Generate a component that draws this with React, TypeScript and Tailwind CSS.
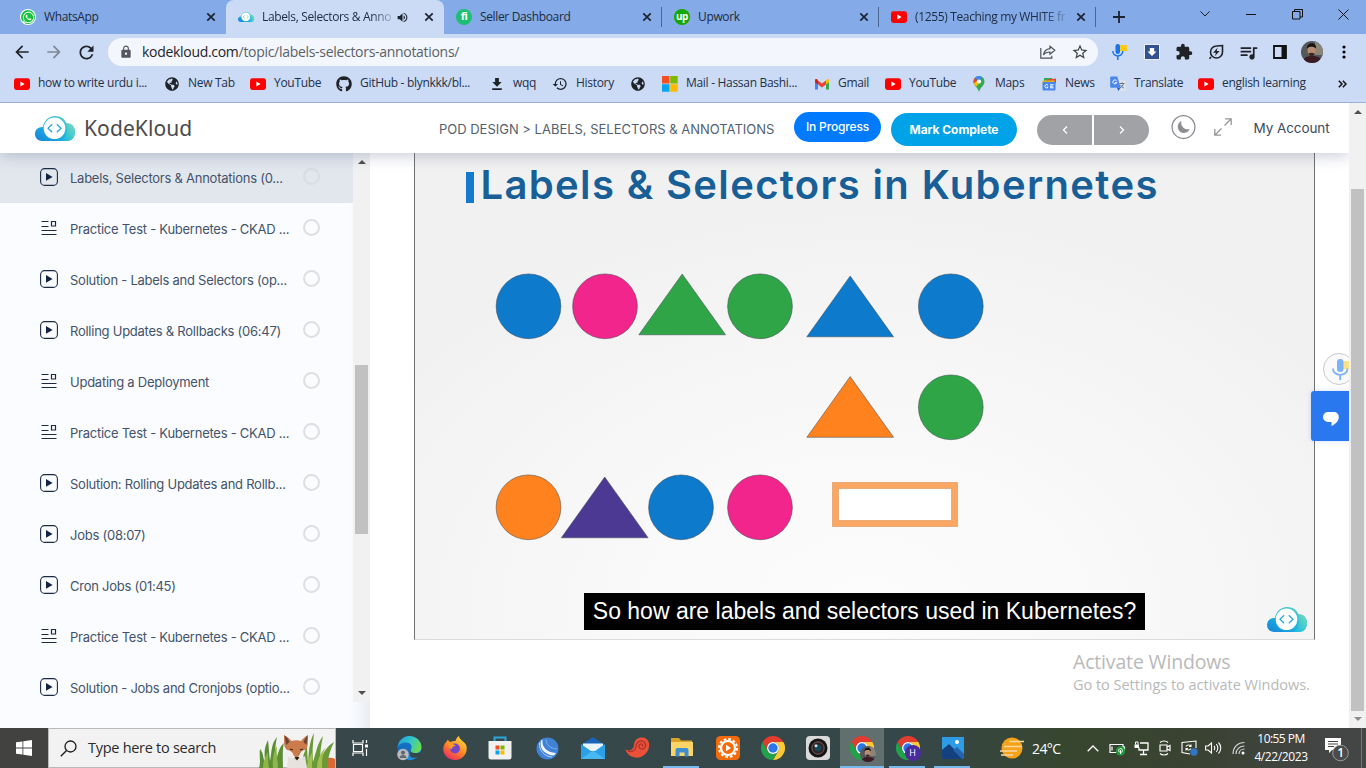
import React from "react";
import { FaGithub, FaGlobeAmericas, FaWhatsapp } from "react-icons/fa";
import { MdExtension, MdHistory, MdLock, MdQueueMusic, MdRefresh, MdStarBorder, MdVolumeUp, MdArrowBack, MdArrowForward } from "react-icons/md";

const UI = "font-['Open_Sans','Noto_Sans',sans-serif]";

/* ---------- small brand icons ---------- */

const YouTube = () => (
  <svg width="16" height="16" viewBox="0 0 16 16">
    <rect x="0" y="2.3" width="16" height="11.6" rx="2.4" fill="#f00" />
    <path d="M6.4 5.6v5l4.2-2.5z" fill="#fff" />
  </svg>
);

const WhatsApp = () => (
  <span className="flex size-4 items-center justify-center rounded-full bg-white">
    <span className="flex size-[14px] items-center justify-center rounded-full bg-[#16c23e] text-white">
      <FaWhatsapp size={13} />
    </span>
  </span>
);

const Cloud = ({ w, h, id }: { w: number; h: number; id: string }) => (
  <svg width={w} height={h} viewBox="0 0 40 25">
    <defs>
      <linearGradient id={id + "a"} x1="0" y1="1" x2="1" y2="0">
        <stop offset="0" stopColor="#1583dc" />
        <stop offset=".55" stopColor="#22bce0" />
        <stop offset="1" stopColor="#6fd6bd" />
      </linearGradient>
      <linearGradient id={id + "b"} x1="0" y1="1" x2="1" y2="0">
        <stop offset="0" stopColor="#12b8e3" />
        <stop offset="1" stopColor="#7ddcb8" />
      </linearGradient>
    </defs>
    <path d="M7 25C3 25 0 22 0 18c0-4 3-7.200 8-7 1-6 5.500-11 12-11 6 0 10 3 11.500 7.500C37 7 40 11 40 16c0 5-3 9-8 9z" fill={`url(#${id}a)`} />
    <path d="M27 25c5-4 6-12 4-17.500 5-1 9 3.500 9 8.500 0 5-3 9-8 9z" fill={`url(#${id}b)`} />
    <circle cx="19.500" cy="12.300" r="10.800" fill="#fff" />
    <path d="M17.200 8.200l-4.200 4 4.200 4M21.800 8.200l4.200 4-4.200 4" fill="none" stroke="#29a9d8" strokeWidth="1.300" />
  </svg>
);

const Microsoft = () => (
  <svg width="16" height="16" viewBox="0 0 16 16">
    <path d="M0 0h7.500v7.500H0z" fill="#f25022" />
    <path d="M8.200 0h7.500v7.500H8.200z" fill="#7fba00" />
    <path d="M0 8.200h7.500v7.500H0z" fill="#00a4ef" />
    <path d="M8.200 8.200h7.500v7.500H8.200z" fill="#ffb900" />
  </svg>
);

const Gmail = () => (
  <svg width="16" height="16" viewBox="0 0 16 16">
    <path d="M1 5v8.500h3V8z" fill="#4285f4" />
    <path d="M15 5v8.500h-3V8z" fill="#34a853" />
    <path d="M4 4.500l4 3 4-3v4l-4 3-4-3z" fill="#ea4335" />
    <path d="M1 4.400c0-1.800 1.800-2 3 0v4L1 6.200z" fill="#c5221f" />
    <path d="M15 4.400c0-1.800-1.800-2-3 0v4l3-2.200z" fill="#fbbc04" />
  </svg>
);

const MapsPin = () => (
  <svg width="16" height="16" viewBox="0 0 16 16">
    <path d="M8 0a5.500 5.500 0 0 0-5.500 5.500c0 4 4 5.500 5.500 10.500 1.500-5 5.500-6.500 5.500-10.500A5.500 5.500 0 0 0 8 0z" fill="#34a853" />
    <path d="M8 0a5.500 5.500 0 0 0-4.300 2L8 5.500l3-4.600A5.500 5.500 0 0 0 8 0z" fill="#4285f4" />
    <path d="M3.700 2a5.500 5.500 0 0 0-.8 5.300L7 4.500z" fill="#ea4335" />
    <path d="M2.900 7.300c.5 1.300 1.300 2.300 2.200 3.400l4-4.500L7 4.400z" fill="#fbbc04" />
    <circle cx="8" cy="5.500" r="2.100" fill="#fff" />
  </svg>
);

const News = () => (
  <svg width="16" height="16" viewBox="0 0 16 16">
    <path d="M3 2l8 0v5H3z" fill="#34a853" />
    <path d="M6 3.500l9-1v5H6z" fill="#ea4335" />
    <path d="M1.500 4.500h12v4h-12z" fill="#fbbc04" />
    <rect x="1.500" y="5.800" width="13" height="8.700" rx="1" fill="#4a86ee" />
    <path d="M7 9.200a1.700 1.700 0 1 0 .1 2H5.800M9 8.800h3.600M9 10.300h2.800M9 11.800h3.600" stroke="#fff" fill="none" />
  </svg>
);

const Translate = () => (
  <svg width="16" height="16" viewBox="0 0 16 16">
    <path d="M6 4.500h8.500a1 1 0 0 1 1 1V14a1 1 0 0 1-1 1H9z" fill="#dfe3e8" />
    <path d="M9.500 7.500h5M12 6.300v1.200M13.500 7.500c-.5 2-2 3.700-3.500 4.300M10.500 8.800c.8 1.600 2 2.600 3.500 3.300" stroke="#6b7683" fill="none" />
    <path d="M1.200.5h6l3.500 11.300H1.200a1 1 0 0 1-1-1v-9.300a1 1 0 0 1 1-1z" fill="#4a86ee" />
    <path d="M6.500 4.700a2 2 0 1 0 .3 1.900H5" stroke="#fff" fill="none" />
    <path d="M7 11.800h3.700L8.300 15z" fill="#2a5fc4" />
  </svg>
);

const Download = () => (
  <svg width="16" height="16" viewBox="0 0 16 16">
    <path d="M6.100 2h3.800v4h2.800L8 10.800 3.300 6h2.800zM3.200 12.300h9.600V14H3.200z" fill="#1f2328" />
  </svg>
);

const CloseX = () => (
  <svg width="10" height="10" viewBox="0 0 10 10">
    <path d="M1.300 1.300l7.400 7.400M8.700 1.300L1.300 8.700" stroke="#1c2330" strokeWidth="1.700" />
  </svg>
);

/* ---------- tab strip ---------- */

type TabProps = { w: string; icon: React.ReactNode; label: string; active?: boolean; fade?: boolean; sep?: boolean };

const Tab = ({ w, icon, label, active, fade, sep }: TabProps) => (
  <div className={`${w} relative flex h-full shrink-0 items-center pl-3 pr-[10px] ${active ? "rounded-t-lg bg-[#cbdbf5]" : ""}`}>
    <span className="mr-2 flex w-4 shrink-0 justify-center">{icon}</span>
    <span className="flex-1 whitespace-nowrap text-[12px] tracking-[-0.35px] text-[#1d2a40]">
      <span className={fade ? "[mask-image:linear-gradient(to_right,black_85%,rgba(0,0,0,0.25))]" : ""}>{label}</span>
    </span>
    {active && <MdVolumeUp size={13} className="mr-[15px] shrink-0 text-[#1c2330]" />}
    <span className="shrink-0"><CloseX /></span>
    {sep && <span className="absolute right-0 top-[7px] h-5 w-px bg-[#4c6690]" />}
  </div>
);

const TabStrip = () => (
  <div className="flex h-[34px] bg-[#84abe8] pl-2">
    <Tab w="w-[218px]" icon={<WhatsApp />} label="WhatsApp" />
    <Tab w="w-[218px]" icon={<Cloud w={16} h={10} id="tab" />} label="Labels, Selectors & Anno" active fade />
    <Tab w="w-[218px]" sep label="Seller Dashboard" icon={<span className="flex size-4 items-center justify-center rounded-full bg-[#1dbf73] pb-px text-[11px] font-bold tracking-[-0.5px] text-white">fi</span>} />
    <Tab w="w-[217px]" sep label="Upwork" icon={<span className="flex size-4 items-center justify-center rounded-full bg-[#14a800] pb-0.5 text-[10px] font-bold tracking-[-0.5px] text-white">up</span>} />
    <Tab w="w-[217px]" sep fade label="(1255) Teaching my WHITE fr" icon={<YouTube />} />
    <div className="flex w-[45px] items-center justify-center">
      <svg width="12" height="12" viewBox="0 0 12 12"><path d="M6 0v12M0 6h12" stroke="#1c2330" strokeWidth="1.800" /></svg>
    </div>
    <div className="ml-[41px] flex h-7">
      <span className="flex w-[46px] items-center justify-center"><svg width="10" height="6" viewBox="0 0 10 6"><path d="M.4.4L5 5 9.600.4" fill="none" stroke="#222" /></svg></span>
      <span className="flex w-[46px] items-center justify-center"><svg width="10" height="1"><path d="M0 .5h10" stroke="#111" /></svg></span>
      <span className="flex w-[46px] items-center justify-center"><svg width="11" height="11" viewBox="0 0 11 11"><path d="M.5 2.500h7.500v7.500H.5zM2.500 2.500v-2H10.500V8H8" fill="none" stroke="#111" /></svg></span>
      <span className="flex w-[46px] items-center justify-center"><svg width="11" height="11" viewBox="0 0 11 11"><path d="M.5.500l10 10M10.500.500l-10 10" stroke="#111" /></svg></span>
    </div>
  </div>
);

/* ---------- toolbar ---------- */

const Cell = ({ children }: { children: React.ReactNode }) => (
  <span className="flex h-full w-8 shrink-0 items-center justify-center text-[#1f2328]">{children}</span>
);

const Avatar = ({ size, id }: { size: number; id: string }) => (
  <svg width={size} height={size} viewBox="0 0 22 22">
    <clipPath id={id}><circle cx="11" cy="11" r="11" /></clipPath>
    <g clipPath={`url(#${id})`}>
      <path d="M0 0h22v22H0z" fill="#55585a" />
      <path d="M14 0h8v14h-8z" fill="#8b8478" />
      <path d="M2 22c0-6 4-7 9-7s10 1 10 7z" fill="#3c1c24" />
      <ellipse cx="10.500" cy="9.500" rx="4" ry="5.300" fill="#b98c72" />
      <path d="M6 7.500c-.5-7 10-7 9 0-2-2.500-7-2.500-9 0z" fill="#171413" />
      <path d="M7.500 12.500c2-1 4.500-1 6 0-.5 3.500-5 3.500-6 0z" fill="#3a2822" />
    </g>
  </svg>
);

const Toolbar = () => (
  <div className="flex h-9 items-center pl-1.5">
    <Cell><MdArrowBack size={20} /></Cell>
    <Cell><MdArrowForward size={20} className="text-[#7d8797]" /></Cell>
    <Cell><MdRefresh size={21} /></Cell>
    <div className="ml-1.5 flex h-7 w-[990px] items-center rounded-full bg-[#f3f7fd] pl-[11px]">
      <MdLock size={14} className="text-[#54585e]" />
      <span className="ml-[9px] flex-1 whitespace-nowrap pb-0.5 text-[14px] tracking-[-0.3px] text-[#5b6067]">
        <span className="text-[#1f2328]">kodekloud.com</span>/topic/labels-selectors-annotations/
      </span>
      <Cell>
        <svg width="16" height="16" viewBox="0 0 16 16"><path d="M.8 4v10.200h11v-2.500M10 2.200l4.800 4-4.800 4V8c-3 0-5 .8-6.500 3 .4-3.500 2.500-6 6.500-6.400z" fill="none" stroke="#4c5157" strokeWidth="1.200" /></svg>
      </Cell>
      <Cell><MdStarBorder size={18} className="text-[#3c4147]" /></Cell>
      <span className="w-0.5" />
    </div>
    <div className="ml-[6px] flex h-full items-center">
      <Cell>
        <svg width="16" height="16" viewBox="0 0 16 16">
          <path d="M8 1h7v6H8z" fill="#fcc81c" />
          <rect x="3.500" y="0" width="4.500" height="10" rx="2.200" fill="#1a73e8" />
          <path d="M.8 7c0 6.500 10 6.500 10 0M5.800 12v4" stroke="#1a73e8" strokeWidth="1.500" fill="none" />
        </svg>
      </Cell>
      <Cell>
        <svg width="16" height="16" viewBox="0 0 16 16">
          <path d="M0 0h16v16H0z" fill="#e9eefa" />
          <rect x="1" y="1" width="14" height="14" fill="#33508f" />
          <path d="M5.800 4h4.400v3.500h2.300L8 12 3.500 7.500h2.300z" fill="#fff" />
        </svg>
      </Cell>
      <Cell><MdExtension size={18} /></Cell>
      <Cell>
        <svg width="16" height="16" viewBox="0 0 16 16">
          <path d="M14.500 1.500v6.500a6 6 0 1 1-6-6zM3 13l-1.500 1.800" fill="none" stroke="#1f2328" strokeWidth="1.600" />
          <path d="M9.600 3.800L5 8.700h3l-1.200 3.600 4.800-5.200H8.700z" fill="#1f2328" />
        </svg>
      </Cell>
      <Cell><MdQueueMusic size={21} /></Cell>
      <Cell>
        <svg width="14" height="14" viewBox="0 0 14 14"><path d="M1 1h12v12H1z" fill="none" stroke="#111" strokeWidth="1.800" /><path d="M8.500 1H13v12H8.500z" fill="#111" /></svg>
      </Cell>
      <Cell><Avatar size={22} id="avatar-toolbar" /></Cell>
      <Cell>
        <svg width="4" height="14" viewBox="0 0 4 14"><circle cx="2" cy="2" r="1.600" /><circle cx="2" cy="7" r="1.600" /><circle cx="2" cy="12" r="1.600" /></svg>
      </Cell>
    </div>
  </div>
);

/* ---------- bookmarks ---------- */

const bookmarks: { w: string; icon: React.ReactNode; label: string }[] = [
  { w: "w-[150px]", icon: <YouTube />, label: "how to write urdu i..." },
  { w: "w-[86px]", icon: <FaGlobeAmericas size={14} />, label: "New Tab" },
  { w: "w-[86px]", icon: <YouTube />, label: "YouTube" },
  { w: "w-[153px]", icon: <FaGithub size={16} />, label: "GitHub - blynkkk/bl..." },
  { w: "w-[63px]", icon: <Download />, label: "wqq" },
  { w: "w-[78px]", icon: <MdHistory size={16} />, label: "History" },
  { w: "w-[32px]", icon: <FaGlobeAmericas size={14} />, label: "" },
  { w: "w-[152px]", icon: <Microsoft />, label: "Mail - Hassan Bashi..." },
  { w: "w-[71px]", icon: <Gmail />, label: "Gmail" },
  { w: "w-[86px]", icon: <YouTube />, label: "YouTube" },
  { w: "w-[70px]", icon: <MapsPin />, label: "Maps" },
  { w: "w-[69px]", icon: <News />, label: "News" },
  { w: "w-[88px]", icon: <Translate />, label: "Translate" },
  { w: "w-[138px]", icon: <YouTube />, label: "english learning" },
];

const Bookmarks = () => (
  <div className="flex h-[33px] items-center border-b border-[#9db0d3] pb-1 pl-[14px] text-[12px] tracking-[-0.3px] text-[#22304a]">
    {bookmarks.map((b, i) => (
      <div key={i} className={`${b.w} flex h-5 shrink-0 items-center gap-2 whitespace-nowrap`}>
        <span className="flex w-4 shrink-0 justify-center text-[#1f2328]">{b.icon}</span>
        <span className="pb-0.5">{b.label}</span>
      </div>
    ))}
    <svg className="ml-[2px]" width="9" height="8" viewBox="0 0 9 8"><path d="M.8.800L4 4 .8 7.200M4.800.800L8 4 4.800 7.200" fill="none" stroke="#111" strokeWidth="1.500" /></svg>
  </div>
);

/* ---------- course page ---------- */

const SiteHeader = () => (
  <header className="relative z-10 flex h-[50px] shrink-0 items-start bg-white pl-[35px] text-[13px] shadow-[0_2px_16px_rgba(70,80,125,0.32)]">
    <span className="mt-[13px]"><Cloud w={40} h={25} id="logo" /></span>
    <span className="ml-[9px] mt-[10px] w-[345px] font-['Noto_Sans',sans-serif] text-[21px] leading-[30px] tracking-[0.1px] text-[#4a4a4c]">KodeKloud</span>
    <span className="ml-[10px] mt-4 w-[355px] whitespace-nowrap leading-5 tracking-[-0.01px] text-[#535f70]">POD DESIGN &gt; LABELS, SELECTORS &amp; ANNOTATIONS</span>
    <span className="mt-[9px] flex h-[30px] w-[87px] items-center justify-center rounded-full bg-[#007bff] text-[12px] font-medium tracking-[-0.15px] text-white">In Progress</span>
    <span className="ml-[10px] mt-[10px] flex h-[33px] w-[126px] items-center justify-center rounded-full bg-[#00a2e8] text-[12px] font-bold tracking-[-0.05px] text-white">Mark Complete</span>
    <span className="ml-5 mt-3 flex gap-0.5">
      <span className="flex h-[30px] w-[55px] items-center justify-center rounded-l-full bg-[#a1a2a6]"><svg width="6" height="8" viewBox="0 0 6 8"><path d="M5 .5L1.500 4 5 7.500" fill="none" stroke="#fff" strokeWidth="1.300" /></svg></span>
      <span className="flex h-[30px] w-[55px] items-center justify-center rounded-r-full bg-[#a1a2a6]"><svg width="6" height="8" viewBox="0 0 6 8"><path d="M1 .5L4.500 4 1 7.500" fill="none" stroke="#fff" strokeWidth="1.300" /></svg></span>
    </span>
    <svg className="ml-[22px] mt-3" width="25" height="25" viewBox="0 0 25 25">
      <circle cx="12.500" cy="12.100" r="11.400" fill="none" stroke="#8b8d91" strokeWidth="1.300" />
      <path d="M10.500 6a6.200 6.200 0 1 0 8.200 8 6.500 6.500 0 0 1-8.200-8z" fill="#8b8d91" />
    </svg>
    <svg className="ml-[18px] mt-[15px]" width="18" height="18" viewBox="0 0 18 18">
      <path d="M10.500 7.500L17 1M11 .8h6.200V7M7.500 10.500L1 17M.8 11v6.200H7" fill="none" stroke="#95979b" strokeWidth="1.300" />
    </svg>
    <span className="ml-[21.500px] mt-[15px] whitespace-nowrap text-[13.500px] leading-5 tracking-[-0.08px] text-[#3c4a60]">My Account</span>
  </header>
);

const PlayIcon = () => (
  <svg width="18" height="18" viewBox="0 0 18 18">
    <rect x=".6" y=".6" width="16.800" height="16.800" rx="4" fill="none" stroke="#1c2b45" strokeWidth="1.100" />
    <path d="M6 5v7.800l6.600-3.900z" fill="#14233f" />
  </svg>
);

const QuizIcon = () => (
  <svg width="18" height="18" viewBox="0 0 18 18">
    <path d="M1.500 2.500h7M1.500 7.500h7M1.500 11.500h15M1.500 15.500h15M11.500 2.500h4v4.500h-4z" fill="none" stroke="#1c2b45" strokeWidth="1.200" />
  </svg>
);

const lessons: { quiz?: boolean; label: string }[] = [
  { label: "Labels, Selectors & Annotations (0..." },
  { label: "Practice Test - Kubernetes - CKAD ...", quiz: true },
  { label: "Solution - Labels and Selectors (op..." },
  { label: "Rolling Updates & Rollbacks (06:47)" },
  { label: "Updating a Deployment", quiz: true },
  { label: "Practice Test - Kubernetes - CKAD ...", quiz: true },
  { label: "Solution: Rolling Updates and Rollb..." },
  { label: "Jobs (08:07)" },
  { label: "Cron Jobs (01:45)" },
  { label: "Practice Test - Kubernetes - CKAD ...", quiz: true },
  { label: "Solution - Jobs and Cronjobs (optio..." },
];

const Sidebar = () => (
  <aside className="flex w-[370px] shrink-0 items-start bg-[#fafcff] shadow-[inset_-24px_0_20px_-20px_rgba(60,70,100,0.13)]">
    <div className="w-[353px]">
      {lessons.map((l, i) => (
        <div key={i} className={`flex items-center pl-10 ${i === 0 ? "h-[50px] bg-[#e2e7ee]" : "h-[51px]"}`}>
          <span className={i === 0 ? "-mt-[3px]" : "-mt-[2px]"}>{l.quiz ? <QuizIcon /> : <PlayIcon />}</span>
          <span className={`ml-3 w-[232px] whitespace-nowrap text-[13px] tracking-[-0.25px] text-[#44536a] ${i === 0 ? "pt-px" : "pt-[3px]"}`}>{l.label}</span>
          <span className={`-mt-[3px] ml-[1px] size-[17px] rounded-full border-2 ${i === 0 ? "border-[#d8dce3]" : "border-[#dedfe3]"}`} />
        </div>
      ))}
    </div>
    <div className="flex h-[549px] w-[17px] flex-col items-center bg-[#f1f1f1]">
      <span className="mt-[7px] border-x-[4px] border-b-[4px] border-x-transparent border-b-[#505050]" />
      <span className="mt-[201px] h-[169px] w-[13px] bg-[#c1c1c1]" />
      <span className="mt-[157px] border-x-[4px] border-t-[4px] border-x-transparent border-t-[#505050]" />
    </div>
  </aside>
);

const circles: [number, number, string][] = [
  [114, 153, "#0d7acc"],
  [190.500, 153, "#f2258c"],
  [345.500, 153, "#2fa547"],
  [536.300, 153, "#0d7acc"],
  [536.300, 254, "#2fa547"],
  [114, 354, "#ff821e"],
  [266.500, 354, "#0d7acc"],
  [345.500, 354, "#f2258c"],
];

const triangles: [number, number, string][] = [
  [268, 121, "#2fa547"],
  [436, 123, "#0d7acc"],
  [436, 223.500, "#ff821e"],
  [190.500, 324, "#4c3993"],
];

const Slide = () => (
  <section className="relative ml-11 h-[487px] w-[901px] shrink-0 border-x border-b border-x-[#6f7173] border-b-[#dcdcdc] bg-[radial-gradient(ellipse_65%_85%_at_50%_95%,#fcfcfc_0%,#f9f9f9_40%,#f1f1f1_100%)]">
    <div className="flex items-start pl-[51px] pt-[11px]">
      <span className="mt-2 h-[31px] w-[7.500px] bg-[#1279cc]" />
      <h1 className="ml-[7px] whitespace-nowrap font-[Inter,sans-serif] text-[40px] font-semibold leading-[42px] tracking-[1.350px] text-[#195f97]">Labels &amp; Selectors in Kubernetes</h1>
    </div>
    <svg className="absolute left-0 top-0" width="899" height="486" viewBox="0 0 899 486">
      {circles.map(([x, y, c], i) => (
        <circle key={i} cx={x - 0.5} cy={y + 0.3} r="32.400" fill={c} stroke="#3c4650" strokeOpacity=".5" />
      ))}
      {triangles.map(([x, y, c], i) => (
        <path key={i} d={`M${x - 0.8} ${y}l43.400 60.800h-86.800z`} fill={c} stroke="#3c4650" strokeOpacity=".5" />
      ))}
      <path d="M420.500 332.500h119v38h-119z" fill="#fff" stroke="#faa764" strokeWidth="6" />
      <path d="M417.500 329.500h125v44h-125zM423.500 335.500h113v32h-113z" fill="none" stroke="#e29a5f" strokeWidth=".7" />
    </svg>
    <div className="absolute left-[169px] top-[440px] flex h-[37px] w-[561px] items-center justify-center whitespace-nowrap bg-black font-['Liberation_Sans',Arial,sans-serif] text-[23px] text-white">
      So how are labels and selectors used in Kubernetes?
    </div>
    <span className="absolute left-[852px] top-[454px]"><Cloud w={40} h={25} id="slide" /></span>
  </section>
);

const Page = () => (
  <div className="flex h-[625px] bg-white font-[Inter,sans-serif]">
    <div className="relative flex w-[1349px] flex-col overflow-hidden">
      <SiteHeader />
      <div className="flex flex-1 items-stretch">
        <Sidebar />
        <main className="flex flex-col">
          <Slide />
          <div className={`${UI} ml-[703px] mt-[10px] whitespace-nowrap text-[#b9b9b9]`}>
            <div className="text-[19.500px] leading-6 tracking-[-0.17px]">Activate Windows</div>
            <div className="text-[14.500px] leading-[22px] tracking-[-0.02px]">Go to Settings to activate Windows.</div>
          </div>
        </main>
      </div>
      <div className="absolute left-[1323px] top-[250px] flex size-8 items-center justify-center rounded-full border border-[#c9cbd0] bg-[#fafafa]">
        <svg width="22" height="22" viewBox="0 0 22 22">
          <path d="M13 3h8v8h-8z" fill="#fde085" />
          <rect x="9" y="1" width="6.500" height="13" rx="3" fill="#7cb2f7" />
          <path d="M5 10.500c0 8.500 14.500 8.500 14.500 0M12.200 17v5" fill="none" stroke="#7cb2f7" strokeWidth="1.800" />
        </svg>
      </div>
      <div className="absolute left-[1311px] top-[288px] flex h-[50px] w-[38px] items-center justify-center rounded-l-[3px] bg-[#2a78f0] pl-0.5 pt-1.5 shadow-[0_0_4px_rgba(42,120,240,0.25)]">
        <svg width="16" height="14" viewBox="0 0 16 14"><path d="M5 0h6a4.800 4.800 0 0 1 4.800 5c0 4-3 7-7.300 9V10H5A5 5 0 0 1 5 0z" fill="#fff" /></svg>
      </div>
    </div>
    <div className="flex w-[17px] flex-col items-center bg-[#f1f1f1]">
      <span className="mt-[7px] border-x-[4px] border-b-[4px] border-x-transparent border-b-[#505050]" />
      <span className="mt-[75px] h-[522px] w-[13px] bg-[#c1c1c1]" />
      <span className="mt-[6px] border-x-[4px] border-t-[4px] border-x-transparent border-t-[#8d8d8d]" />
    </div>
  </div>
);

/* ---------- taskbar ---------- */

const Chrome = () => (
  <svg width="24" height="24" viewBox="0 0 24 24">
    <path d="M1.600 6A12 12 0 0 1 22.400 6H12A6 6 0 0 0 6.800 15z" fill="#e33b2e" />
    <path d="M22.400 6A12 12 0 0 1 12 24l5.200-9A6 6 0 0 0 12 6z" fill="#fcc934" />
    <path d="M1.600 6A12 12 0 0 0 12 24l5.200-9A6 6 0 0 1 6.800 15z" fill="#22a04a" />
    <circle cx="12" cy="12" r="6" fill="#fff" />
    <circle cx="12" cy="12" r="4.700" fill="#2b77ea" />
  </svg>
);

const Fox = () => (
  <svg width="76" height="39" viewBox="0 0 76 39">
    <path d="M0 39C2 33 0 27 1 20c4 5 3 10 5 14 0-8-2-13 3-23 1 8 1 14 2 21 2-10 1-17 7-24-2 9-2 15-1 24 2-7 3-14 8-18-2 8-1 18-1 25z" fill="#5b8e34" />
    <path d="M4 39c0-7 3-12 5-16 0 7 0 11 1 16zM14 39c-1-10 1-17 4-22-1 9 1 14 1 22z" fill="#8db548" />
    <path d="M66 30c4-2 8-1 10 0v9H65z" fill="#d76a35" />
    <path d="M44 39c1-9-1-18 3-26 2 8 1 14 2 20 1-9 1-20 6-29-1 10-2 20-1 29 3-9 4-18 10-26-2 9-3 18-3 25 3-8 7-15 14-19-4 8-6 16-7 26z" fill="#6a9a38" />
    <path d="M48 39c0-7 3-12 6-17-1 6-1 11-1 17zM58 39c0-9 4-15 8-20-3 8-3 14-3 20z" fill="#a3bf52" />
    <path d="M29 27c4 3 13 3 17 0l2 12H28z" fill="#e7e2de" />
    <path d="M25 6c3 1.500 5.500 3.500 7.500 6 3-1 7-1 9.500 0 2-2.500 4-4.500 7-6 0 5 0 8-.5 11-1 4-3.500 5-5.500 9-3 6-8 6-11 0-2-4-5.500-5-6.500-9-.5-3-.5-6-.5-11z" fill="#cc7c4c" />
    <path d="M25.500 6.500c3 2 4 4 5 6.500l-3.500 3zM48.500 6.500c-2 2-3 4-4 6.500l3 3z" fill="#6b4435" />
    <path d="M27.500 21c3 0 6 1.500 7 5l2.500 3c-3 2-5.500-1-6.500-3.500-.7-1.700-2.200-2.500-3-4.500zM46.500 21c-3 0-5 1.500-6 5L38 29c3.500 2 5.500-1 6.500-3.500z" fill="#f6eeea" />
    <path d="M31 20l3 1M44 20l-3 1" stroke="#3a2520" strokeWidth="1.300" />
    <path d="M35.500 28h5L38 31.500z" fill="#231c1c" />
  </svg>
);

const Task = ({ children, bar, active, gap }: { children: React.ReactNode; bar?: string; active?: boolean; gap?: boolean }) => (
  <span className={`relative flex h-10 shrink-0 items-center justify-center ${gap ? "ml-[3px]" : ""} ${active ? "w-11 mr-px bg-[#626f6f]" : "w-[45px]"}`}>
    {children}
    {bar && <span className={`${bar} absolute bottom-0 h-0.5 bg-[#76b9ed]`} />}
  </span>
);

const Tray = ({ children }: { children: React.ReactNode }) => (
  <span className="flex w-6 shrink-0 items-center justify-center">{children}</span>
);

const Taskbar = () => (
  <footer className="flex h-10 items-center bg-[linear-gradient(to_right,#37474a_25%,#36474a_66%,#37462f_78%,#3a4232_88%,#444545_97%)] text-white">
    <span className="flex h-10 w-12 items-center justify-center bg-[#424241]">
      <svg width="16" height="16" viewBox="0 0 16 16"><path d="M0 2.300l6.500-.9v6.200H0zM7.300 1.200L16 0v7.600H7.300zM0 8.400h6.500v6.200L0 13.700zM7.300 8.400H16V16l-8.700-1.200z" fill="#fff" /></svg>
    </span>
    <div className="flex h-10 w-[288px] items-center border border-[#b9b9b9] bg-[#f2f2f2] pl-[11px]">
      <svg width="17" height="17" viewBox="0 0 17 17"><circle cx="10.500" cy="6.500" r="5.500" fill="none" stroke="#1b1b1b" strokeWidth="1.300" /><path d="M6.500 10.500L.8 16.200" stroke="#1b1b1b" strokeWidth="1.300" /></svg>
      <span className="ml-[11px] flex-1 whitespace-nowrap text-[14.500px] tracking-[-0.28px] text-[#2b2b2b]">Type here to search</span>
      <Fox />
    </div>
    <span className="flex w-12 justify-center">
      <svg width="17" height="16" viewBox="0 0 17 16"><path d="M1 0v3h10V0M1 16v-3h10v3M1.500 4.500h9v7h-9zM14.500 0v3M14.500 9v7" fill="none" stroke="#fff" strokeWidth="1.200" /><path d="M13 4.500h3v3h-3z" fill="#fff" /></svg>
    </span>
    <div className="ml-[3px] flex">
      <Task>
        <svg width="25" height="25" viewBox="0 0 25 25">
          <defs><linearGradient id="edge" x1="0" y1="0" x2="1" y2=".3"><stop offset="0" stopColor="#1aa0e0" /><stop offset=".6" stopColor="#35c5c8" /><stop offset="1" stopColor="#66d85a" /></linearGradient></defs>
          <circle cx="12.500" cy="12" r="12" fill="#146fc0" />
          <path d="M13 14c2 3 7 4 10.500 2.500L25 20l-6 5h-5z" fill="#36474a" />
          <path d="M9 10c-2 5 1 10 6 11.500 2 .6 4 .3 5.500-.5-2 2-5 3.200-8 3.200C8 24 6 15 9 10z" fill="#1a8fe0" />
          <path d="M.6 11C2 4 6.500 0 12.500 0 19 0 24.500 5 24.500 11c0 5-4 6.500-7.500 6-3-.5-4-2-3-3.500 2-4-1-7-5-7C5 6.500 2 8 .6 11z" fill="url(#edge)" />
          <circle cx="6" cy="18.500" r="5.800" fill="#b9bcc0" />
          <circle cx="6" cy="16.700" r="2.100" fill="#65696e" /><path d="M2.500 22c0-4 7-4 7 0z" fill="#65696e" />
        </svg>
      </Task>
      <Task>
        <svg width="24" height="24" viewBox="0 0 24 24">
          <defs><linearGradient id="ff" x1=".8" y1="0" x2=".2" y2="1"><stop offset="0" stopColor="#ffdd3c" /><stop offset=".5" stopColor="#ff8a22" /><stop offset="1" stopColor="#ee2466" /></linearGradient></defs>
          <path d="M3 6c1 0 1-2 1.500-2 1 0 1.500 1.500 2.500 2 2-1 5-1 5.500-1C13 3 14 1 16 0c0 4 6 5 7.500 10C25 18 19 24 12 24S0 19 .3 12.500C.5 9.500 1.500 8 3 6z" fill="url(#ff)" />
          <circle cx="12" cy="12.500" r="5" fill="#7545c8" />
          <path d="M5 8c3-1 6 0 8 2-3 0-4 1-4 3-2 0-4-2-4-5z" fill="#ff9b2a" />
        </svg>
      </Task>
      <Task>
        <svg width="24" height="24" viewBox="0 0 24 24">
          <path d="M6.500 5V1.500h11V5" fill="none" stroke="#2ba6dc" strokeWidth="2" />
          <path d="M.5 5h23v16a2.500 2.500 0 0 1-2.500 2.500H3A2.500 2.500 0 0 1 .5 21z" fill="#f1f1f1" />
          <path d="M7.500 9.500h4v4h-4z" fill="#f04e23" /><path d="M12.500 9.500h4v4h-4z" fill="#7db700" /><path d="M7.500 14.500h4v4h-4z" fill="#0ba3ea" /><path d="M12.500 14.500h4v4h-4z" fill="#fdb900" />
        </svg>
      </Task>
      <Task gap>
        <svg width="23" height="23" viewBox="0 0 23 23">
          <circle cx="11.500" cy="11.500" r="11" fill="#3f82d6" />
          <path d="M6.500 2.500c-1 7 4 13 13.500 13.500-1 1.500-2 2.200-2.500 2.500C8 17.500 3 11 5 3.500z" fill="#eef5fe" />
          <path d="M3.500 5.500c-.5 8 4.500 14 12.500 14.500" fill="none" stroke="#bcd6f7" />
          <path d="M10 2.500c0 5 4 9 11 9.500" fill="none" stroke="#7fb0ec" />
        </svg>
      </Task>
      <Task>
        <svg width="24" height="22" viewBox="0 0 24 22"><path d="M0 8L12 0l12 8v5H0z" fill="#1766ba" /><path d="M2 6.500h20V14H2z" fill="#eaf5fc" /><path d="M0 7l12 8.500L24 7v15H0z" fill="#2aa0e6" /><path d="M0 22l12-8.500L24 22z" fill="#48b8f2" /></svg>
      </Task>
      <Task>
        <svg width="25" height="22" viewBox="0 0 25 22">
          <path d="M.5 12.500c4 2.500 8.500 0 8.500-5C9.500 2.500 13.500 0 17.500.5c5 .5 7.500 5 6.500 9.500-1.500 7.500-8 11.500-14 10.500-5-.8-8.500-4-9.500-8z" fill="#ea5138" />
          <path d="M17 9.500c1.500-1.500 0-3-1.500-2.500-2.500 1-2 4.500 1 5 4 .5 5.500-4.500 2.500-7-3-2.300-8-.5-8 4.500 0 4-4 6-8 4.500" fill="none" stroke="#a83128" strokeWidth="1.200" />
        </svg>
      </Task>
      <Task bar="left-[3px] w-[36px]">
        <svg width="23" height="20" viewBox="0 0 23 20"><path d="M0 0h8l2 2.500h11V6H0z" fill="#dda326" /><path d="M0 4h22v14H0z" fill="#fbd568" /><path d="M4.500 18.500V12a2 2 0 0 1 2-2h9a2 2 0 0 1 2 2v6.500h-4v-4h-5v4z" fill="#3d8fd0" /></svg>
      </Task>
      <Task>
        <svg width="24" height="24" viewBox="0 0 24 24"><rect width="24" height="24" rx="4.500" fill="#f56b0a" /><circle cx="12" cy="12" r="9" fill="none" stroke="#fff" strokeWidth="2" strokeDasharray="2.700 2.010" /><circle cx="12" cy="12" r="7" fill="none" stroke="#fff" strokeWidth="2.200" /><path d="M10 8.800v6.400l5-3.200z" fill="#fff" /></svg>
      </Task>
      <Task><Chrome /></Task>
      <Task>
        <svg width="24" height="24" viewBox="0 0 24 24"><rect width="24" height="24" rx="4" fill="#dadada" /><circle cx="12" cy="12" r="9.500" fill="#141414" /><circle cx="12" cy="12" r="6.200" fill="#3b1e1f" stroke="#777" strokeWidth=".8" /><circle cx="12" cy="12" r="3.500" fill="#11495a" /><circle cx="10" cy="9.800" r="1.500" fill="#bfe6ee" /></svg>
      </Task>
      <Task active bar="left-0 w-11">
        <span className="relative"><Chrome /><span className="absolute left-2.5 top-2.5"><Avatar size={16} id="avatar-task" /></span></span>
      </Task>
      <Task bar="left-[4px] w-[36px]">
        <span className="relative"><Chrome /><span className="absolute left-[9px] top-[9px] flex size-4 items-center justify-center rounded-full bg-[#4c2a9e] text-[9px]">H</span></span>
      </Task>
      <Task bar="left-[4px] w-[36px]">
        <svg width="22" height="22" viewBox="0 0 22 22"><path d="M0 0h22v22H0z" fill="#2f9be6" /><path d="M0 13l7-6 15 15H0z" fill="#13417f" /><path d="M11 13l4-3 7 7v5h-2z" fill="#2364ad" /><circle cx="15" cy="5" r="2" fill="#fff" /></svg>
      </Task>
    </div>
    <svg className="ml-[25px]" width="24" height="22" viewBox="0 0 24 22">
      <circle cx="12" cy="11" r="10.500" fill="#f7a21b" />
      <path d="M9 4.500h15M4 9.500h18M0 14h17M1 18h12" stroke="#fbd9a2" strokeWidth="1.700" />
    </svg>
    <span className="ml-2 w-[49px] whitespace-nowrap text-[14px] tracking-[-0.6px]">24°C</span>
    <Tray><svg width="12" height="7" viewBox="0 0 12 7"><path d="M.7 6.300L6 1l5.300 5.300" fill="none" stroke="#fff" strokeWidth="1.300" /></svg></Tray>
    <Tray><svg width="17" height="16" viewBox="0 0 17 16"><path d="M1 4.500h13v8H1zM14.500 7h1v3h-1M3 6.500v4" fill="none" stroke="#fff" strokeWidth="1.200" /><circle cx="11.500" cy="11" r="4.700" fill="#21983c" /><path d="M9.500 10.500c1-3 4-2 4 0s-3 3-4 0zM11.500 10v4" stroke="#fff" fill="none" /></svg></Tray>
    <Tray><svg width="15" height="15" viewBox="0 0 15 15"><path d="M6 2h8v7H5V6.500M9.500 9v4M6 13.500h7" fill="none" stroke="#fff" strokeWidth="1.300" /><path d="M.5 3.500h4.500V7H.5z" fill="#fff" /><path d="M1.500 3.500V1h2.500v2.500" fill="none" stroke="#fff" /></svg></Tray>
    <Tray><svg width="12" height="16" viewBox="0 0 12 16"><path d="M1 5h7v6H1zM8 7l3-1.500v5L8 9M1 2.500c2-2 6-2 8 0M1 13.500c2 2 6 2 8 0" fill="none" stroke="#fff" strokeWidth="1.200" /></svg></Tray>
    <Tray><svg width="17" height="16" viewBox="0 0 17 16"><path d="M15 8V1L1 2.500v10l8 1.500M5 6.500C6 4.500 9 4.500 10 6.500M10 4.500v2H8M10 8.500c-1 2-4 2-5 0M5 10.500v-2h2" fill="none" stroke="#fff" strokeWidth="1.100" /><circle cx="13" cy="12" r="3.700" fill="#2f77c4" /></svg></Tray>
    <Tray><svg width="17" height="14" viewBox="0 0 17 14"><path d="M.6 5v4h2.500L6.500 12V2L3.100 5zM9 5c1 1 1 3 0 4M11.300 3.200c2 2 2 5.600 0 7.600M13.500 1.500c3 3 3 8 0 11" fill="none" stroke="#fff" strokeWidth="1.100" /></svg></Tray>
    <Tray>
      <svg className="ml-1" width="14" height="14" viewBox="0 0 14 14">
        <path d="M1 13C1 6 6 1.500 12.500 1.500M4 13c0-5 4-8 8.500-8M7 13c0-3 2.500-5 5.500-5" fill="none" stroke="#d5d8d5" strokeWidth="1.200" />
        <circle cx="11" cy="12" r="1.500" fill="#fff" />
      </svg>
    </Tray>
    <div className="ml-[2px] w-[60px] whitespace-nowrap text-center text-[12px] leading-[18px] tracking-[-0.4px]">
      <div className="tracking-[-0.55px]">10:55 PM</div>
      <div>4/22/2023</div>
    </div>
    <svg className="ml-[14px] mt-1" width="24" height="26" viewBox="0 0 24 26">
      <path d="M0 1h16v12H7l-3 3v-3H0z" fill="#fff" /><path d="M3 4.500h10M3 7h10M3 9.500h6" stroke="#444" />
      <circle cx="15.500" cy="16" r="7.800" fill="#4a4b4b" stroke="#999" />
      <text x="12.300" y="20.300" fontSize="12" fontWeight="600" fill="#fff">1</text>
    </svg>
    <span className="ml-auto mr-1 h-10 w-px bg-[#777]" />
  </footer>
);

export default function App() {
  return (
    <div className={`${UI} flex h-[768px] w-[1366px] flex-col overflow-hidden bg-[#cbdbf5]`}>
      <TabStrip />
      <Toolbar />
      <Bookmarks />
      <Page />
      <Taskbar />
    </div>
  );
}
